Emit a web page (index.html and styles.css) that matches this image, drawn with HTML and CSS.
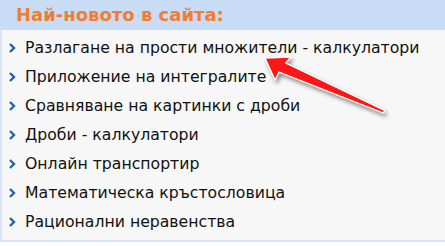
FILE: index.html
```html
<!DOCTYPE html>
<html>
<head>
<meta charset="utf-8">
<link rel="stylesheet" href="styles.css">
</head>
<body>
<div class="box">
  <div class="head">Най-новото в сайта:</div>
  <ul class="list">
    <li><span class="chev"><svg width="7" height="10" viewBox="0 0 7 10"><path d="M1 1 L5 5 L1 9" fill="none" stroke="#2563a8" stroke-width="2.4"/></svg></span>Разлагане на прости множители - калкулатори</li>
    <li><span class="chev"><svg width="7" height="10" viewBox="0 0 7 10"><path d="M1 1 L5 5 L1 9" fill="none" stroke="#2563a8" stroke-width="2.4"/></svg></span>Приложение на интегралите</li>
    <li><span class="chev"><svg width="7" height="10" viewBox="0 0 7 10"><path d="M1 1 L5 5 L1 9" fill="none" stroke="#2563a8" stroke-width="2.4"/></svg></span>Сравняване на картинки с дроби</li>
    <li><span class="chev"><svg width="7" height="10" viewBox="0 0 7 10"><path d="M1 1 L5 5 L1 9" fill="none" stroke="#2563a8" stroke-width="2.4"/></svg></span>Дроби - калкулатори</li>
    <li><span class="chev"><svg width="7" height="10" viewBox="0 0 7 10"><path d="M1 1 L5 5 L1 9" fill="none" stroke="#2563a8" stroke-width="2.4"/></svg></span>Онлайн транспортир</li>
    <li><span class="chev"><svg width="7" height="10" viewBox="0 0 7 10"><path d="M1 1 L5 5 L1 9" fill="none" stroke="#2563a8" stroke-width="2.4"/></svg></span>Математическа кръстословица</li>
    <li><span class="chev"><svg width="7" height="10" viewBox="0 0 7 10"><path d="M1 1 L5 5 L1 9" fill="none" stroke="#2563a8" stroke-width="2.4"/></svg></span>Рационални неравенства</li>
  </ul>
  <svg class="arrow" width="445" height="246" viewBox="0 0 445 246">
    <defs>
      <filter id="sh" x="-20%" y="-20%" width="140%" height="140%">
        <feGaussianBlur in="SourceAlpha" stdDeviation="2"/>
        <feOffset dx="2" dy="3" result="b"/>
        <feComponentTransfer><feFuncA type="linear" slope="0.45"/></feComponentTransfer>
        <feMerge><feMergeNode/><feMergeNode in="SourceGraphic"/></feMerge>
      </filter>
    </defs>
    <path filter="url(#sh)" d="M265 58 L291 57 L285.5 63 L384.5 110.5 L383.5 113 L279 72 L275 80 Z" fill="#ff1212" stroke="#fff" stroke-width="1.3" stroke-linejoin="round"/>
  </svg>
</div>
</body>
</html>
```
FILE: styles.css
```css
html, body { margin: 0; padding: 0; background: #fff; }
.box {
  position: relative;
  width: 445px;
  height: 242px;
  box-sizing: border-box;
  background: #f7f7f7;
  border-left: 2px solid #d7e4f7;
  border-bottom: 2px solid #d7e4f7;
  font-family: "DejaVu Sans", Verdana, sans-serif;
}
.head {
  height: 30px;
  margin-left: -2px;
  padding-left: 16px;
  background: #c8dcf5;
  color: #f47c30;
  font-weight: bold;
  font-size: 18px;
  line-height: 30px;
}
.list {
  list-style: none;
  margin: 0;
  padding: 3px 0 0 0;
}
.list li {
  display: flex;
  align-items: center;
  height: 29px;
  color: #111;
  font-size: 15.7px;
}
.chev {
  display: flex;
  width: 8px;
  margin-left: 7px;
  margin-right: 8px;
}
.arrow {
  position: absolute;
  left: -2px;
  top: 0;
  pointer-events: none;
}
```
